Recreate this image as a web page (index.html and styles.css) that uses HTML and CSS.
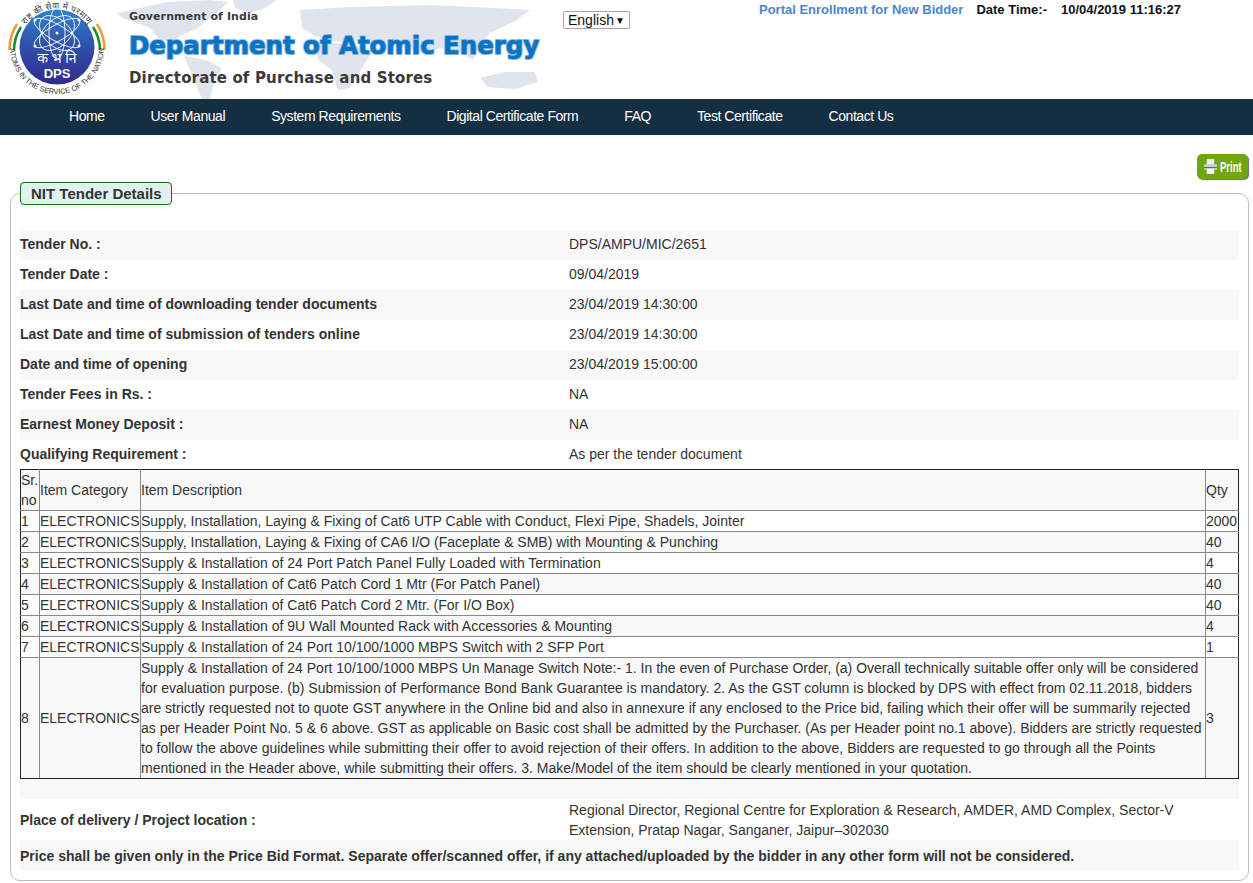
FILE: index.html
```html
<!DOCTYPE html>
<html lang="en">
<head>
<meta charset="utf-8">
<title>NIT Tender Details</title>
<link rel="stylesheet" href="styles.css">
</head>
<body>
<header class="top">
  <svg class="map" viewBox="0 0 440 99" aria-hidden="true">
    <path class="land" d="M7 13 L30 8 L57 2 L100 0 L118 2 L110 10 L100 18 L88 28 L70 36 L62 42 L50 40 L40 28 L24 22 L12 18 Z"/>
    <path class="land" d="M123 0 L167 0 L155 8 L140 13 L125 8 Z"/>
    <path class="land" d="M74 56 L96 60 L112 68 L104 82 L100 99 L92 99 L84 80 Z"/>
    <path class="land" d="M190 10 L240 7 L320 5 L385 8 L420 10 L407 20 L380 33 L370 45 L363 60 L350 52 L330 48 L315 55 L300 48 L280 42 L255 40 L225 42 L205 36 L192 28 Z"/>
    <path class="land" d="M205 42 L240 44 L262 52 L252 68 L240 88 L228 90 L222 70 L208 60 Z"/>
    <path class="land" d="M370 78 L395 72 L425 72 L428 82 L405 89 L378 87 Z"/>
  </svg>
  <svg class="logo" viewBox="0 0 98 98" role="img" aria-label="DPS">
    <defs>
      <linearGradient id="disc" x1="0" y1="0" x2="0" y2="1">
        <stop offset="0" stop-color="#2f82cf"/>
        <stop offset=".5" stop-color="#2f4fa8"/>
        <stop offset="1" stop-color="#332a8e"/>
      </linearGradient>
      <path id="ringTop" d="M10.500 47 A38.500 38.500 0 0 1 87.500 47"/>
      <path id="ringBottom" d="M2 47 A47 47 0 0 0 96 47"/>
    </defs>
    <circle cx="49" cy="47" r="37.500" fill="url(#disc)"/>
    <g fill="none" stroke="#fff" stroke-width=".9">
      <ellipse cx="49" cy="33" rx="26" ry="8" transform="rotate(30 49 33)"/>
      <ellipse cx="49" cy="33" rx="26" ry="8" transform="rotate(150 49 33)"/>
      <ellipse cx="49" cy="33" rx="26" ry="8" transform="rotate(90 49 33)"/>
      <ellipse cx="49" cy="33" rx="13" ry="21" transform="rotate(45 49 33)"/>
      <ellipse cx="49" cy="33" rx="13" ry="21" transform="rotate(135 49 33)"/>
    </g>
    <g fill="#fff">
      <circle cx="27" cy="20" r="1.500"/><circle cx="71" cy="20" r="1.500"/>
      <circle cx="27" cy="46" r="1.500"/><circle cx="71" cy="46" r="1.500"/>
      <circle cx="49" cy="33" r="1.500"/>
    </g>
    <path class="arc" stroke="#f39a2c" d="M1.500 50 A47 47 0 0 1 9 24"/>
    <path class="arc" stroke="#1c8a3a" d="M6 50 A43 43 0 0 1 13 27"/>
    <path class="arc" stroke="#f39a2c" d="M96.500 50 A47 47 0 0 0 89 24"/>
    <path class="arc" stroke="#1c8a3a" d="M92 50 A43 43 0 0 0 85 27"/>
    <text class="hindi" x="49" y="63" text-anchor="middle">क भं नि</text>
    <text class="dps" x="49" y="78" text-anchor="middle">DPS</text>
    <text class="ring-hi"><textPath href="#ringTop" startOffset="50%" text-anchor="middle">राष्ट्र की सेवा में परमाणु</textPath></text>
    <text class="ring-en"><textPath href="#ringBottom" startOffset="50%" text-anchor="middle">ATOMS IN THE SERVICE OF THE NATION</textPath></text>
  </svg>
  <div class="brand">
    <div class="gov">Government of India</div>
    <div class="dept">Department of Atomic Energy</div>
    <div class="dir">Directorate of Purchase and Stores</div>
  </div>
  <div class="lang"><span>English</span><span class="caret">▼</span></div>
  <div class="meta">
    <a class="enroll" href="#">Portal Enrollment for New Bidder</a>
    <span class="dt-label">Date Time:-</span>
    <span class="dt-value">10/04/2019 11:16:27</span>
  </div>
</header>
<nav class="nav">
  <a href="#">Home</a>
  <a href="#">User Manual</a>
  <a href="#">System Requirements</a>
  <a href="#">Digital Certificate Form</a>
  <a href="#">FAQ</a>
  <a href="#">Test Certificate</a>
  <a href="#">Contact Us</a>
</nav>
<div class="tools">
  <a class="print" href="#">
    <svg class="print-icon" viewBox="0 0 14 17" aria-hidden="true">
      <rect x="3" y="0.500" width="8" height="6" fill="#eef2ee"/>
      <path d="M1 6 H13 Q14 6 14 7 V12 H0 V7 Q0 6 1 6 Z" fill="#c9d3cf"/>
      <rect x="0" y="9" width="14" height="1.200" fill="#5e6b60"/>
      <rect x="3" y="11" width="8" height="5.500" fill="#f4f6f4"/>
    </svg>
    <span class="print-label">Print</span>
  </a>
</div>
<fieldset class="panel">
  <legend class="panel-title">NIT Tender Details</legend>
  <div class="rows">
    <div class="row"><b>Tender No. :</b><span>DPS/AMPU/MIC/2651</span></div>
    <div class="row"><b>Tender Date :</b><span>09/04/2019</span></div>
    <div class="row"><b>Last Date and time of downloading tender documents</b><span>23/04/2019 14:30:00</span></div>
    <div class="row"><b>Last Date and time of submission of tenders online</b><span>23/04/2019 14:30:00</span></div>
    <div class="row"><b>Date and time of opening</b><span>23/04/2019 15:00:00</span></div>
    <div class="row"><b>Tender Fees in Rs. :</b><span>NA</span></div>
    <div class="row"><b>Earnest Money Deposit :</b><span>NA</span></div>
    <div class="row"><b>Qualifying Requirement :</b><span>As per the tender document</span></div>
  </div>
  <table class="items">
    <colgroup><col class="c-sr"><col class="c-cat"><col class="c-desc"><col class="c-qty"></colgroup>
    <thead>
      <tr><th>Sr. no</th><th>Item Category</th><th>Item Description</th><th>Qty</th></tr>
    </thead>
    <tbody>
      <tr><td>1</td><td>ELECTRONICS</td><td>Supply, Installation, Laying &amp; Fixing of Cat6 UTP Cable with Conduct, Flexi Pipe, Shadels, Jointer</td><td>2000</td></tr>
      <tr><td>2</td><td>ELECTRONICS</td><td>Supply, Installation, Laying &amp; Fixing of CA6 I/O (Faceplate &amp; SMB) with Mounting &amp; Punching</td><td>40</td></tr>
      <tr><td>3</td><td>ELECTRONICS</td><td>Supply &amp; Installation of 24 Port Patch Panel Fully Loaded with Termination</td><td>4</td></tr>
      <tr><td>4</td><td>ELECTRONICS</td><td>Supply &amp; Installation of Cat6 Patch Cord 1 Mtr (For Patch Panel)</td><td>40</td></tr>
      <tr><td>5</td><td>ELECTRONICS</td><td>Supply &amp; Installation of Cat6 Patch Cord 2 Mtr. (For I/O Box)</td><td>40</td></tr>
      <tr><td>6</td><td>ELECTRONICS</td><td>Supply &amp; Installation of 9U Wall Mounted Rack with Accessories &amp; Mounting</td><td>4</td></tr>
      <tr><td>7</td><td>ELECTRONICS</td><td>Supply &amp; Installation of 24 Port 10/100/1000 MBPS Switch with 2 SFP Port</td><td>1</td></tr>
      <tr><td>8</td><td>ELECTRONICS</td><td>Supply &amp; Installation of 24 Port 10/100/1000 MBPS Un Manage Switch Note:- 1. In the even of Purchase Order, (a) Overall technically suitable offer only will be considered for evaluation purpose. (b) Submission of Performance Bond Bank Guarantee is mandatory. 2. As the GST column is blocked by DPS with effect from 02.11.2018, bidders are strictly requested not to quote GST anywhere in the Online bid and also in annexure if any enclosed to the Price bid, failing which their offer will be summarily rejected as per Header Point No. 5 &amp; 6 above. GST as applicable on Basic cost shall be admitted by the Purchaser. (As per Header point no.1 above). Bidders are strictly requested to follow the above guidelines while submitting their offer to avoid rejection of their offers. In addition to the above, Bidders are requested to go through all the Points mentioned in the Header above, while submitting their offers. 3. Make/Model of the item should be clearly mentioned in your quotation.</td><td>3</td></tr>
    </tbody>
  </table>
  <div class="spacer"></div>
  <div class="row row-tall"><b>Place of delivery / Project location :</b><span>Regional Director, Regional Centre for Exploration &amp; Research, AMDER, AMD Complex, Sector-V Extension, Pratap Nagar, Sanganer, Jaipur–302030</span></div>
  <div class="note"><b>Price shall be given only in the Price Bid Format. Separate offer/scanned offer, if any attached/uploaded by the bidder in any other form will not be considered.</b></div>
</fieldset>
</body>
</html>
```
FILE: styles.css
```css
* { box-sizing: border-box; }
html, body { margin: 0; padding: 0; }
body {
  font-family: "Liberation Sans", Arial, sans-serif;
  font-size: 14px;
  color: #333;
  background: #fff;
}
a { text-decoration: none; }

.top {
  position: relative;
  height: 99px;
  display: flex;
  align-items: flex-start;
  overflow: hidden;
}
.map {
  position: absolute;
  left: 110px;
  top: 0;
  width: 440px;
  height: 99px;
}
.land { fill: #e0e5ed; }
.logo {
  position: relative;
  flex: none;
  width: 98px;
  height: 98px;
  margin-left: 8px;
}
.arc { fill: none; stroke-width: 2.500; }
.hindi { font: 14px "Noto Sans", "DejaVu Sans", sans-serif; fill: #fff; }
.dps { font: 700 13px "Liberation Sans", sans-serif; fill: #fff; }
.ring-hi { font: 8.500px "Noto Sans", "DejaVu Sans", sans-serif; letter-spacing: .4px; fill: #333; }
.ring-en { font: 7.400px "Liberation Sans", sans-serif; fill: #333; }

.brand {
  position: relative;
  flex: none;
  width: 434px;
  margin-left: 23px;
  padding-top: 9px;
  font-family: "DejaVu Sans", sans-serif;
  font-weight: 700;
  color: #3a3a3a;
}
.gov { font-size: 11px; line-height: 15px; letter-spacing: .1px; }
.dept {
  margin-top: 4px;
  font-size: 24.500px;
  line-height: 36px;
  letter-spacing: -.05px;
  white-space: nowrap;
  color: #0a74c4;
  -webkit-text-stroke: .6px #0a74c4;
  text-shadow: 1px 1px 0 #a9c7e6, -1px -1px 0 #a9c7e6, 1px -1px 0 #a9c7e6, -1px 1px 0 #a9c7e6;
}
.dir { margin-top: 4px; font-size: 15px; line-height: 20px; letter-spacing: .15px; }

.lang {
  position: relative;
  flex: none;
  width: 67px;
  height: 18px;
  margin: 11px 0 0 0;
  padding: 0 4px 0 4px;
  display: flex;
  justify-content: space-between;
  align-items: center;
  border: 1px solid #a6a6a6;
  border-radius: 2px;
  background: #fff;
  color: #111;
}
.caret { font-size: 10px; }

.meta {
  position: relative;
  flex: none;
  display: flex;
  margin: 2px 0 0 129px;
  line-height: 16px;
  font-size: 13px;
  font-weight: 700;
  color: #111;
  white-space: nowrap;
}
.enroll { color: #4a86c5; }
.dt-label { margin-left: 13px; }
.dt-value { margin-left: 14px; }

.nav {
  height: 36px;
  padding: 0 0 2px 69px;
  display: flex;
  align-items: center;
  gap: 46px;
  background: #152f42;
}
.nav a { color: #fff; font-size: 14px; letter-spacing: -.44px; }

.tools {
  display: flex;
  justify-content: flex-end;
  padding: 19px 5px 0 0;
  margin-bottom: 3px;
}
.print {
  width: 51px;
  height: 25px;
  display: flex;
  align-items: center;
  justify-content: center;
  gap: 3px;
  border-radius: 5px;
  background: #6ea70f;
  box-shadow: 1px 1px 1px #6b6b6b;
  color: #fff;
  font-size: 14px;
  font-weight: 700;
}
.print-icon { flex: none; width: 13px; height: 17px; }
.print-label { width: 22px; transform: scaleX(.68); transform-origin: left center; }

.panel {
  margin: 0 4px 0 10px;
  padding: 0 9px 10px;
  border: 1px solid #bcbcbc;
  border-radius: 10px;
  min-width: 0;
}
.panel-title {
  padding: 0 10px;
  width: 152px;
  height: 23px;
  margin: 0 13px 0 0;
  line-height: 21px;
  font-size: 15px;
  font-weight: 700;
  white-space: nowrap;
  border: 1px solid #1d6a1d;
  border-radius: 4px;
  background: #e2f0f0;
}
.rows { margin-top: 25px; margin-bottom: -1px; }
.row {
  display: grid;
  grid-template-columns: 549px 1fr;
  align-items: center;
  min-height: 30px;
  line-height: 20px;
}
.rows .row { padding-bottom: 2px; }
.rows .row:nth-child(odd) { background: #f8f8f8; }
.row-tall { min-height: 40px; padding-top: 1px; }

.items {
  width: 1218px;
  table-layout: fixed;
  border-collapse: collapse;
  line-height: 20px;
}
.items th, .items td {
  padding: 0;
  border: 1px solid #888;
  font-weight: 400;
  text-align: left;
  vertical-align: middle;
}
.items th { border-top-color: #222; }
.items tr > :first-child { border-left-color: #222; }
.items tr > :last-child { border-right-color: #222; }
.items tbody tr:last-child td { border-bottom-color: #222; }
.items thead tr, .items tbody tr:nth-child(even) { background: #f8f8f8; }
.c-sr { width: 19px; }
.c-cat { width: 101px; }
.c-desc { width: 1065px; }
.c-qty { width: 33px; }

.spacer { height: 20px; background: #f8f8f8; }
.note { height: 30px; padding-top: 1px; display: flex; align-items: center; background: #f8f8f8; }
```
